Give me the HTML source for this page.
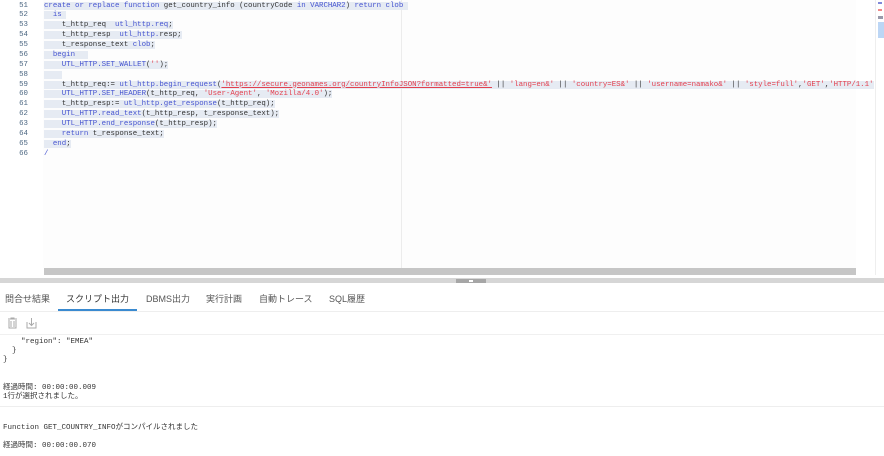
<!DOCTYPE html>
<html><head><meta charset="utf-8"><style>
*{margin:0;padding:0;box-sizing:border-box}
body{width:884px;height:456px;overflow:hidden;background:#fff;position:relative;font-family:"Liberation Sans","Noto Sans CJK JP",sans-serif}
.code{position:absolute;left:0;top:0;width:884px;height:278px;background:#fff}
.ln{position:absolute;left:0;width:28px;text-align:right;font:7.4px/9.87px "Liberation Mono",monospace;color:#4a6580}
.cl{position:absolute;left:44px;font:7.4px/9.87px "Liberation Mono","Noto Sans CJK JP",monospace;color:#333;white-space:pre}
.cl span.s{background:#e6ebf3}
.k{color:#4654d0}.r{color:#e3404f}.u{text-decoration:underline;text-decoration-color:#e3404f}
.out{font:7.5px/9px "Liberation Mono","Noto Sans CJK JP",monospace;color:#333;position:absolute;left:3px;white-space:pre}
.tab{position:absolute;top:292px;font-size:9px;color:#555}
.lines{position:absolute;left:0;top:1.5px;width:884px;height:270px}
</style></head><body>
<div class="code">
<div style="position:absolute;left:43px;top:0;width:813px;height:268px;background:#fdfdfd"></div>
<div style="position:absolute;left:401px;top:0;width:1px;height:268px;background:#ececec"></div>
<div style="position:absolute;left:875px;top:0;width:1px;height:275px;background:#eee"></div>
<div style="position:absolute;left:878px;top:2px;width:4px;height:2px;background:#8088d8"></div>
<div style="position:absolute;left:878px;top:9px;width:4px;height:2px;background:#e88"></div>
<div style="position:absolute;left:878px;top:16px;width:5px;height:3px;background:#99a"></div>
<div style="position:absolute;left:878px;top:22px;width:6px;height:16px;background:#bcd6f5"></div>
<div style="position:absolute;left:44px;top:268px;width:812px;height:7px;background:#c6c6c6"></div>
</div>
<div style="position:absolute;left:0;top:278px;width:884px;height:5px;background:#d6d6d6"></div>
<div style="position:absolute;left:456px;top:279px;width:30px;height:4px;background:#a6a6a6"></div>
<div style="position:absolute;left:469px;top:280px;width:4px;height:2px;background:#fff"></div>

<div class="lines">
<div class="ln" style="top:0">51</div><div class="ln" style="top:9.87px">52</div><div class="ln" style="top:19.7px">53</div><div class="ln" style="top:29.6px">54</div><div class="ln" style="top:39.5px">55</div><div class="ln" style="top:49.3px">56</div><div class="ln" style="top:59.2px">57</div><div class="ln" style="top:69.1px">58</div><div class="ln" style="top:79px">59</div><div class="ln" style="top:88.8px">60</div><div class="ln" style="top:98.7px">61</div><div class="ln" style="top:108.6px">62</div><div class="ln" style="top:118.4px">63</div><div class="ln" style="top:128.3px">64</div><div class="ln" style="top:138.2px">65</div><div class="ln" style="top:148px">66</div>

<div class="cl" style="top:0"><span class="s"><span class="k">create or replace function</span> get_country_info (countryCode <span class="k">in VARCHAR2</span>) <span class="k">return clob</span> </span></div>
<div class="cl" style="top:9.87px"><span class="s">  <span class="k">is</span> </span></div>
<div class="cl" style="top:19.7px"><span class="s">    t_http_req  <span class="k">utl_http.req</span>;</span></div>
<div class="cl" style="top:29.6px"><span class="s">    t_http_resp  <span class="k">utl_http.</span>resp;</span></div>
<div class="cl" style="top:39.5px"><span class="s">    t_response_text <span class="k">clob</span>;</span></div>
<div class="cl" style="top:49.3px"><span class="s">  <span class="k">begin</span>   </span></div>
<div class="cl" style="top:59.2px"><span class="s">    <span class="k">UTL_HTTP.SET_WALLET</span>(<span class="r">''</span>);</span></div>
<div class="cl" style="top:69.1px"><span class="s">    </span></div>
<div class="cl" style="top:79px"><span class="s">    t_http_req:= <span class="k">utl_http.begin_request</span>(<span class="r u">'https://secure.geonames.org/countryInfoJSON?formatted=true&amp;'</span> || <span class="r">'lang=en&amp;'</span> || <span class="r">'country=ES&amp;'</span> || <span class="r">'username=namako&amp;'</span> || <span class="r">'style=full'</span>,<span class="r">'GET'</span>,<span class="r">'HTTP/1.1'</span></span></div>
<div class="cl" style="top:88.8px"><span class="s">    <span class="k">UTL_HTTP.SET_HEADER</span>(t_http_req, <span class="r">'User-Agent'</span>, <span class="r">'Mozilla/4.0'</span>);</span></div>
<div class="cl" style="top:98.7px"><span class="s">    t_http_resp:= <span class="k">utl_http.get_response</span>(t_http_req);</span></div>
<div class="cl" style="top:108.6px"><span class="s">    <span class="k">UTL_HTTP.read_text</span>(t_http_resp, t_response_text);</span></div>
<div class="cl" style="top:118.4px"><span class="s">    <span class="k">UTL_HTTP.end_response</span>(t_http_resp);</span></div>
<div class="cl" style="top:128.3px"><span class="s">    <span class="k">return</span> t_response_text;</span></div>
<div class="cl" style="top:138.2px"><span class="s">  <span class="k">end</span>;</span></div>
<div class="cl" style="top:148px"><span class="k">/</span></div>
</div>

<div class="tab" style="left:5px">問合せ結果</div>
<div class="tab" style="left:66px;color:#333">スクリプト出力</div>
<div class="tab" style="left:146px">DBMS出力</div>
<div class="tab" style="left:206px">実行計画</div>
<div class="tab" style="left:259px">自動トレース</div>
<div class="tab" style="left:329px">SQL履歴</div>
<div style="position:absolute;left:58px;top:309px;width:79px;height:2px;background:#3a8ad0"></div>
<div style="position:absolute;left:0;top:311px;width:884px;height:1px;background:#eee"></div>
<svg style="position:absolute;left:7px;top:317px" width="30" height="12" viewBox="0 0 30 12" fill="none" stroke="#aaa" stroke-width="1"><path d="M1 2h9M4 2V1h3v1M2 3v8h7V3M4 4v6M7 4v6"/><path d="M29 5v6H20V5M24.5 1v7M22 6l2.5 2.5L27 6"/></svg>
<div style="position:absolute;left:0;top:335px;width:884px;height:121px;overflow:hidden">
<div class="out" style="top:-5px;color:#777">    "street" : "Calle Bolivia Center" </div>
<div class="out" style="top:3px">    "region": "EMEA"</div>
<div class="out" style="top:12px">  }</div>
<div class="out" style="top:21px">}</div>
<div class="out" style="top:49px">経過時間: 00:00:00.009</div>
<div class="out" style="top:58px">1行が選択されました。</div>
<div style="position:absolute;left:0;top:71px;width:884px;height:1px;background:#eee"></div>
<div class="out" style="top:89px">Function GET_COUNTRY_INFOがコンパイルされました</div>
<div class="out" style="top:107px">経過時間: 00:00:00.070</div>
</div>
<div style="position:absolute;left:0;top:334px;width:884px;height:1px;background:#f0f0f0"></div>
</body></html>
